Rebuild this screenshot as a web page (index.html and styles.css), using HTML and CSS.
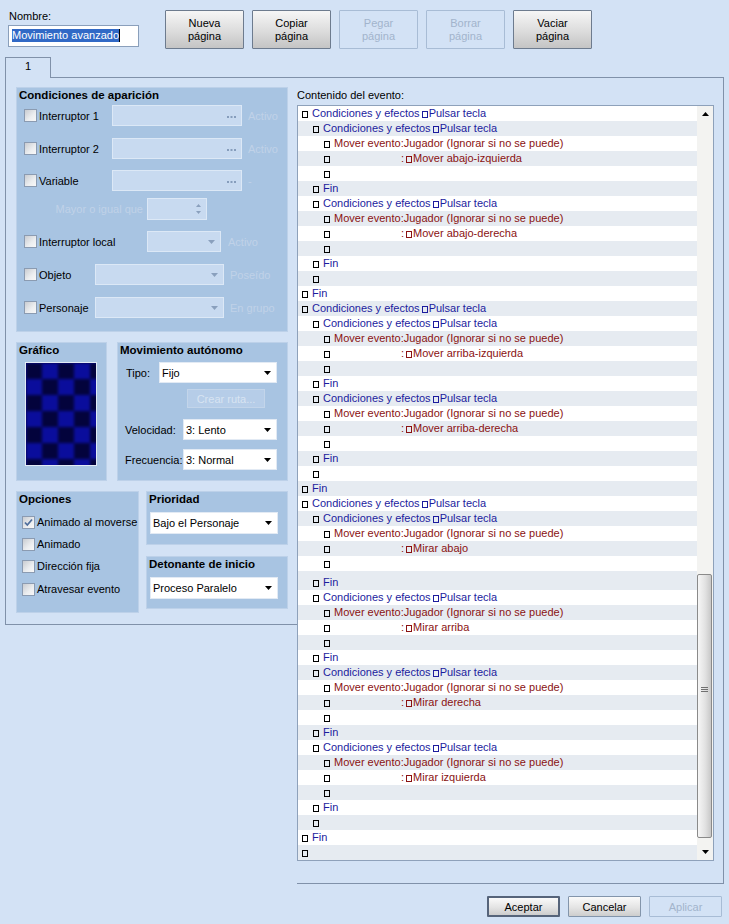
FILE: index.html
```html
<!DOCTYPE html>
<html lang="es">
<head>
<meta charset="utf-8">
<title>Evento</title>
<link rel="stylesheet" href="styles.css">
</head>
<body>
<div class="header">
  <div class="namebox">
    <div class="lbl">Nombre:</div>
    <div class="nameinput"><span class="sel">Movimiento avanzado</span><span class="caret"></span></div>
  </div>
  <div class="pagebtns">
    <div class="btn">Nueva<br>página</div>
    <div class="btn">Copiar<br>página</div>
    <div class="btn dis">Pegar<br>página</div>
    <div class="btn dis">Borrar<br>página</div>
    <div class="btn">Vaciar<br>página</div>
  </div>
</div>
<div class="tabs"><div class="tab">1</div></div>
<div class="content">
  <div class="leftpane">
    <div class="group g-cond">
      <div class="gtitle">Condiciones de aparición</div>
      <div class="crow first"><span class="cb"></span><span class="clab l-sw">Interruptor 1</span><span class="field f-sw"><svg class="dots" width="9" height="2" viewBox="0 0 9 2"><rect x="0" y="0" width="2" height="2"/><rect x="3.5" y="0" width="2" height="2"/><rect x="7" y="0" width="2" height="2"/></svg></span><span class="sfx">Activo</span></div>
      <div class="crow"><span class="cb"></span><span class="clab l-sw">Interruptor 2</span><span class="field f-sw"><svg class="dots" width="9" height="2" viewBox="0 0 9 2"><rect x="0" y="0" width="2" height="2"/><rect x="3.5" y="0" width="2" height="2"/><rect x="7" y="0" width="2" height="2"/></svg></span><span class="sfx">Activo</span></div>
      <div class="crow var"><span class="cb"></span><span class="clab l-sw">Variable</span><span class="field f-sw"><svg class="dots" width="9" height="2" viewBox="0 0 9 2"><rect x="0" y="0" width="2" height="2"/><rect x="3.5" y="0" width="2" height="2"/><rect x="7" y="0" width="2" height="2"/></svg></span><span class="sfx">-</span></div>
      <div class="crow mayor"><span class="mlab">Mayor o igual que</span><span class="field f-spin"><svg class="spin" width="5" height="10" viewBox="0 0 5 10"><polygon points="2.5,0 5,3 0,3"/><polygon points="0,7 5,7 2.5,10"/></svg></span></div>
      <div class="crow"><span class="cb"></span><span class="clab l-local">Interruptor local</span><span class="field f-local"><svg class="arr" width="7" height="4" viewBox="0 0 7 4"><polygon points="0,0 7,0 3.5,4"/></svg></span><span class="sfx s7">Activo</span></div>
      <div class="crow"><span class="cb"></span><span class="clab l-obj">Objeto</span><span class="field f-obj"><svg class="arr" width="7" height="4" viewBox="0 0 7 4"><polygon points="0,0 7,0 3.5,4"/></svg></span><span class="sfx">Poseído</span></div>
      <div class="crow"><span class="cb"></span><span class="clab l-obj">Personaje</span><span class="field f-obj"><svg class="arr" width="7" height="4" viewBox="0 0 7 4"><polygon points="0,0 7,0 3.5,4"/></svg></span><span class="sfx">En grupo</span></div>
    </div>

    <div class="brow">
      <div class="group g-graph">
        <div class="gtitle">Gráfico</div>
        <div class="gimg"><div class="checker"></div></div>
      </div>
      <div class="group g-move">
        <div class="gtitle">Movimiento autónomo</div>
        <div class="mrow tipo"><span class="ml ml-tipo">Tipo:</span><span class="dd dd-tipo"><span>Fijo</span><svg width="7" height="4" viewBox="0 0 7 4"><polygon points="0,0 7,0 3.5,4"/></svg></span></div>
        <div class="crear">Crear ruta...</div>
        <div class="mrow vel"><span class="ml ml-vel">Velocidad:</span><span class="dd dd-vel"><span>3: Lento</span><svg width="7" height="4" viewBox="0 0 7 4"><polygon points="0,0 7,0 3.5,4"/></svg></span></div>
        <div class="mrow frec"><span class="ml ml-vel">Frecuencia:</span><span class="dd dd-vel"><span>3: Normal</span><svg width="7" height="4" viewBox="0 0 7 4"><polygon points="0,0 7,0 3.5,4"/></svg></span></div>
      </div>
    </div>

    <div class="brow b2">
      <div class="group g-opt">
        <div class="gtitle">Opciones</div>
        <div class="orow first"><span class="cb checked"><svg width="11" height="11" viewBox="0 0 11 11"><path d="M2 5.5 L4.3 8 L9 2.5" fill="none" stroke="#4f6e9c" stroke-width="1.8"/></svg></span><span class="olab">Animado al moverse</span></div>
        <div class="orow"><span class="cb"></span><span class="olab">Animado</span></div>
        <div class="orow"><span class="cb"></span><span class="olab">Dirección fija</span></div>
        <div class="orow last"><span class="cb"></span><span class="olab">Atravesar evento</span></div>
      </div>
      <div class="rcol">
        <div class="group g-prio">
          <div class="gtitle">Prioridad</div>
          <div class="dd dd-wide"><span>Bajo el Personaje</span><svg width="7" height="4" viewBox="0 0 7 4"><polygon points="0,0 7,0 3.5,4"/></svg></div>
        </div>
        <div class="group g-det">
          <div class="gtitle">Detonante de inicio</div>
          <div class="dd dd-wide"><span>Proceso Paralelo</span><svg width="7" height="4" viewBox="0 0 7 4"><polygon points="0,0 7,0 3.5,4"/></svg></div>
        </div>
      </div>
    </div>
  </div>

  <div class="rightpane">
    <div class="evlabel">Contenido del evento:</div>
    <div class="list">
      <div class="rows">
        <div class="r"><span class="b"></span><span class="blue">Condiciones y efectos<span class="b bi"></span>Pulsar tecla</span></div>
        <div class="r l1"><span class="b"></span><span class="blue">Condiciones y efectos<span class="b bi"></span>Pulsar tecla</span></div>
        <div class="r l2"><span class="b"></span><span class="red">Mover evento:Jugador (Ignorar si no se puede)</span></div>
        <div class="r l2"><span class="b"></span><span class="sp"></span><span class="red">:<span class="b bi"></span>Mover abajo-izquierda</span></div>
        <div class="r l2"><span class="b"></span></div>
        <div class="r l1"><span class="b"></span><span class="blue">Fin</span></div>
        <div class="r l1"><span class="b"></span><span class="blue">Condiciones y efectos<span class="b bi"></span>Pulsar tecla</span></div>
        <div class="r l2"><span class="b"></span><span class="red">Mover evento:Jugador (Ignorar si no se puede)</span></div>
        <div class="r l2"><span class="b"></span><span class="sp"></span><span class="red">:<span class="b bi"></span>Mover abajo-derecha</span></div>
        <div class="r l2"><span class="b"></span></div>
        <div class="r l1"><span class="b"></span><span class="blue">Fin</span></div>
        <div class="r l1"><span class="b"></span></div>
        <div class="r"><span class="b"></span><span class="blue">Fin</span></div>
        <div class="r"><span class="b"></span><span class="blue">Condiciones y efectos<span class="b bi"></span>Pulsar tecla</span></div>
        <div class="r l1"><span class="b"></span><span class="blue">Condiciones y efectos<span class="b bi"></span>Pulsar tecla</span></div>
        <div class="r l2"><span class="b"></span><span class="red">Mover evento:Jugador (Ignorar si no se puede)</span></div>
        <div class="r l2"><span class="b"></span><span class="sp"></span><span class="red">:<span class="b bi"></span>Mover arriba-izquierda</span></div>
        <div class="r l2"><span class="b"></span></div>
        <div class="r l1"><span class="b"></span><span class="blue">Fin</span></div>
        <div class="r l1"><span class="b"></span><span class="blue">Condiciones y efectos<span class="b bi"></span>Pulsar tecla</span></div>
        <div class="r l2"><span class="b"></span><span class="red">Mover evento:Jugador (Ignorar si no se puede)</span></div>
        <div class="r l2"><span class="b"></span><span class="sp"></span><span class="red">:<span class="b bi"></span>Mover arriba-derecha</span></div>
        <div class="r l2"><span class="b"></span></div>
        <div class="r l1"><span class="b"></span><span class="blue">Fin</span></div>
        <div class="r l1"><span class="b"></span></div>
        <div class="r"><span class="b"></span><span class="blue">Fin</span></div>
        <div class="r"><span class="b"></span><span class="blue">Condiciones y efectos<span class="b bi"></span>Pulsar tecla</span></div>
        <div class="r l1"><span class="b"></span><span class="blue">Condiciones y efectos<span class="b bi"></span>Pulsar tecla</span></div>
        <div class="r l2"><span class="b"></span><span class="red">Mover evento:Jugador (Ignorar si no se puede)</span></div>
        <div class="r l2"><span class="b"></span><span class="sp"></span><span class="red">:<span class="b bi"></span>Mirar abajo</span></div>
        <div class="r l2"><span class="b"></span></div>
        <div class="r l1 tall"><span class="b"></span><span class="blue">Fin</span></div>
        <div class="r l1"><span class="b"></span><span class="blue">Condiciones y efectos<span class="b bi"></span>Pulsar tecla</span></div>
        <div class="r l2"><span class="b"></span><span class="red">Mover evento:Jugador (Ignorar si no se puede)</span></div>
        <div class="r l2"><span class="b"></span><span class="sp"></span><span class="red">:<span class="b bi"></span>Mirar arriba</span></div>
        <div class="r l2"><span class="b"></span></div>
        <div class="r l1"><span class="b"></span><span class="blue">Fin</span></div>
        <div class="r l1"><span class="b"></span><span class="blue">Condiciones y efectos<span class="b bi"></span>Pulsar tecla</span></div>
        <div class="r l2"><span class="b"></span><span class="red">Mover evento:Jugador (Ignorar si no se puede)</span></div>
        <div class="r l2"><span class="b"></span><span class="sp"></span><span class="red">:<span class="b bi"></span>Mirar derecha</span></div>
        <div class="r l2"><span class="b"></span></div>
        <div class="r l1"><span class="b"></span><span class="blue">Fin</span></div>
        <div class="r l1"><span class="b"></span><span class="blue">Condiciones y efectos<span class="b bi"></span>Pulsar tecla</span></div>
        <div class="r l2"><span class="b"></span><span class="red">Mover evento:Jugador (Ignorar si no se puede)</span></div>
        <div class="r l2"><span class="b"></span><span class="sp"></span><span class="red">:<span class="b bi"></span>Mirar izquierda</span></div>
        <div class="r l2"><span class="b"></span></div>
        <div class="r l1"><span class="b"></span><span class="blue">Fin</span></div>
        <div class="r l1"><span class="b"></span></div>
        <div class="r"><span class="b"></span><span class="blue">Fin</span></div>
        <div class="r"><span class="b"></span></div>
      </div>
      <div class="sb">
        <div class="sb-btn"><svg width="7" height="4" viewBox="0 0 7 4"><polygon points="3.5,0 7,4 0,4"/></svg></div>
        <div class="sb-track">
          <div class="thumb"><svg width="7" height="5" viewBox="0 0 7 5"><rect x="0" y="0" width="7" height="1"/><rect x="0" y="2" width="7" height="1"/><rect x="0" y="4" width="7" height="1"/></svg></div>
        </div>
        <div class="sb-btn"><svg width="7" height="4" viewBox="0 0 7 4"><polygon points="0,0 7,0 3.5,4"/></svg></div>
      </div>
    </div>
  </div>
</div>
<div class="footer">
  <div class="fbtn def">Aceptar</div>
  <div class="fbtn">Cancelar</div>
  <div class="fbtn dis">Aplicar</div>
</div>
</body>
</html>
```

FILE: styles.css
```css
* { box-sizing: border-box; }
html, body { margin: 0; padding: 0; }
body {
  width: 729px;
  height: 924px;
  overflow: hidden;
  background: #d3e2f5;
  font-family: "Liberation Sans", Arial, sans-serif;
  font-size: 11px;
  color: #000;
}

/* header */
.header { display: flex; align-items: flex-start; height: 57px; padding: 9px 0 0 8px; }
.namebox { width: 131px; }
.lbl { height: 16px; line-height: 14px; padding-left: 1px; }
.nameinput { display: flex; height: 22px; background: #fff; border: 1px solid #8a9fbb; padding: 3px 0 0 3px; }
.sel { background: #3169c6; color: #fff; height: 13px; line-height: 13px; }
.caret { width: 1px; height: 13px; background: #000; }
.pagebtns { display: flex; gap: 8px; margin: 1px 0 0 26px; }
.btn {
  width: 79px; height: 39px;
  border: 1px solid #6d7b8e; border-radius: 1px;
  background: linear-gradient(#f6f6f6, #dcdcdc 55%, #c4c4c4);
  display: flex; align-items: center; justify-content: center;
  text-align: center; line-height: 13px;
}
.btn.dis { background: none; border-color: #a8bcd5; color: #a2b4cc; }

/* tabs */
.tabs { display: flex; height: 20px; padding-left: 5px; }
.tab {
  position: relative; z-index: 1;
  width: 46px; height: 21px;
  border: 1px solid #8091a9; border-bottom: none;
  background: #d3e2f5;
  text-align: center; line-height: 17px;
}
.content { display: flex; width: 719px; margin-left: 5px; border-top: 1px solid #8091a9; }
.leftpane { width: 292px; height: 547px; border-left: 1px solid #8091a9; border-bottom: 1px solid #8091a9; padding: 9px 0 0 10px; }
.rightpane { flex: 1; height: 806px; border-right: 1px solid #8091a9; border-bottom: 1px solid #8091a9; padding-top: 10px; }

/* groups */
.group { background: #a8c4e2; border: 1px solid #bdd1e9; padding-left: 1px; }
.gtitle { font-weight: bold; font-size: 11.5px; line-height: 14px; height: 14px; padding-left: 1px; white-space: nowrap; }
.g-cond { width: 272px; height: 245px; }

.crow { display: flex; align-items: center; height: 21px; margin-top: 12px; padding-left: 6px; white-space: nowrap; }
.crow.first { margin-top: 3px; }
.crow.var { margin-top: 11px; }
.crow.mayor { margin-top: 7px; }
.cb {
  flex: none; width: 13px; height: 13px;
  border: 1px solid #8b9bb1;
  background: linear-gradient(135deg, #c9ccd1, #eceef0 60%, #f8f8f8);
  display: flex; align-items: center; justify-content: center;
}
.clab { padding-left: 2px; flex: none; }
.l-sw { width: 75px; }
.l-local { width: 110px; }
.l-obj { width: 58px; }
.mlab { width: 123px; text-align: right; padding-right: 4px; color: #c0d2e8; }
.field {
  flex: none; height: 21px;
  background: #c8daf0; border: 1px solid #dce8f6;
  display: flex; align-items: center; justify-content: flex-end; padding-right: 5px;
}
.f-sw { width: 130px; }
.f-local { width: 74px; }
.f-obj { width: 129px; }
.f-spin { width: 60px; height: 22px; padding-right: 5px; }
.dots { fill: #869dbc; margin-top: 3px; }
.arr { fill: #8aa0bd; }
.spin { fill: #8aa0bd; }
.sfx { margin-left: 6px; color: #c0d2e8; }
.sfx.s7 { margin-left: 7px; }

/* second row */
.brow { display: flex; gap: 10px; margin-top: 10px; }
.g-graph { width: 91px; height: 139px; }
.gimg { width: 72px; height: 104px; margin: 5px 0 0 7px; border: 1px solid #e3ebf5; overflow: hidden; }
.checker {
  width: 84px; height: 116px; margin: -6px 0 0 -6px;
  background: conic-gradient(#0a0d9c 25%, #03033c 0 50%, #0a0d9c 0 75%, #03033c 0);
  background-size: 32px 32px;
  background-position: 6px 6px;
  filter: blur(1.6px);
}
.g-move { width: 171px; height: 139px; }
.mrow { display: flex; align-items: center; height: 21px; white-space: nowrap; }
.mrow.tipo { margin-top: 5px; }
.mrow.vel { margin-top: 11px; }
.mrow.frec { margin-top: 9px; }
.ml { flex: none; }
.ml-tipo { width: 40px; padding-left: 7px; }
.ml-vel { width: 64px; padding-left: 6px; }
.dd {
  flex: none; height: 21px; background: #fff; border: 1px solid #e2eaf4;
  display: flex; align-items: center; justify-content: space-between;
  padding: 0 5px 0 2px; white-space: nowrap;
}
.dd svg { fill: #000; }
.dd-tipo { width: 118px; }
.dd-vel { width: 94px; }
.crear {
  width: 78px; height: 19px; margin: 6px 0 0 68px;
  border: 1px solid #c3d5ea; background: #b6cde8; color: #d8e4f2;
  display: flex; align-items: center; justify-content: center;
}

/* options */
.b2 { gap: 7px; }
.g-opt { width: 123px; height: 122px; }
.orow { display: flex; align-items: center; height: 22px; padding-left: 4px; white-space: nowrap; }
.orow.first { margin-top: 5px; }
.orow.last { margin-top: 1px; }
.olab { margin-left: 2px; }
.rcol { display: flex; flex-direction: column; gap: 11px; width: 142px; }
.g-prio { height: 54px; }
.g-det { height: 53px; }
.dd-wide { width: 128px; height: 22px; margin: 6px 0 0 2px; }

/* event list */
.evlabel { height: 14px; line-height: 14px; white-space: nowrap; }
.list { display: flex; width: 417px; height: 756px; margin-top: 3px; border: 1px solid #8ea1ba; background: #fff; }
.rows { width: 399px; }
.r { height: 15px; line-height: 15px; padding-left: 4px; white-space: nowrap; overflow: hidden; }
.r:nth-child(even) { background: #e6ebf1; }
.r.l1 { padding-left: 15px; }
.r.l2 { padding-left: 26px; }
.r.tall { height: 19px; padding-top: 4px; }
.b { display: inline-block; width: 6px; height: 7px; border: 1px solid #000; margin-right: 4px; vertical-align: -1px; }
.b.bi { border-color: currentColor; margin: 0 1px 0 2px; }
.sp { display: inline-block; width: 67px; }
.blue { color: #1c1c9e; }
.red { color: #8a1212; }

.sb { width: 16px; display: flex; flex-direction: column; background: #f3f3f1; }
.sb-btn { height: 16px; display: flex; align-items: center; justify-content: center; }
.sb-btn svg { fill: #000; }
.sb-track { flex: 1; padding-top: 452px; }
.thumb {
  width: 15px; height: 264px;
  border: 1px solid #8a8a8a; border-radius: 2px;
  background: linear-gradient(90deg, #f6f6f6, #e2e2e2 55%, #c8c8c8);
  display: flex; justify-content: center; padding-top: 112px;
}
.thumb svg { fill: #707070; }

/* footer */
.footer { display: flex; justify-content: flex-end; gap: 8px; padding-right: 7px; margin-top: 12px; }
.fbtn {
  width: 73px; height: 21px;
  border: 1px solid #8395ab; border-radius: 1px;
  background: linear-gradient(#fafafa, #e4e4e4 55%, #cdcdcd);
  display: flex; align-items: center; justify-content: center;
}
.fbtn.def { border: 2px solid #56647a; }
.fbtn.dis { background: none; border-color: #a8bcd5; color: #a2b4cc; }
```
